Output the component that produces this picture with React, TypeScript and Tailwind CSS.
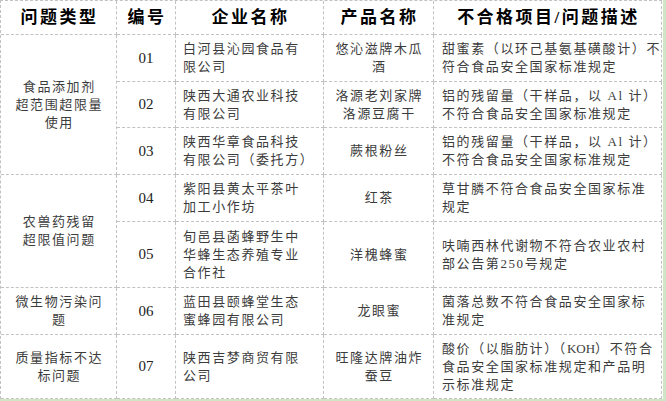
import React from "react";

type Row = {
  no: string;
  company: React.ReactNode[];
  product: React.ReactNode[];
  desc: React.ReactNode[];
};

const rows: Row[] = [
  { no: "01", company: ["白河县沁园食品有", "限公司"], product: ["悠沁滋牌木瓜", "酒"], desc: ["甜蜜素（以环己基氨基磺酸计）不", "符合食品安全国家标准规定"] },
  { no: "02", company: ["陕西大通农业科技", "有限公司"], product: ["洛源老刘家牌", "洛源豆腐干"], desc: ["铝的残留量（干样品，以 Al 计）", "不符合食品安全国家标准规定"] },
  { no: "03", company: ["陕西华章食品科技", "有限公司（委托方）"], product: ["蕨根粉丝"], desc: ["铝的残留量（干样品，以 Al 计）", "不符合食品安全国家标准规定"] },
  { no: "04", company: ["紫阳县黄太平茶叶", "加工小作坊"], product: ["红茶"], desc: ["草甘膦不符合食品安全国家标准", "规定"] },
  { no: "05", company: ["旬邑县菡蜂野生中", "华蜂生态养殖专业", "合作社"], product: ["洋槐蜂蜜"], desc: ["呋喃西林代谢物不符合农业农村", "部公告第250号规定"] },
  { no: "06", company: ["蓝田县颐蜂堂生态", "蜜蜂园有限公司"], product: ["龙眼蜜"], desc: ["菌落总数不符合食品安全国家标", "准规定"] },
  {
    no: "07",
    company: ["陕西吉梦商贸有限", "公司"],
    product: ["旺隆达牌油炸", "蚕豆"],
    desc: [
      <>
        酸价（以脂肪计）（<span className="tracking-[0px]">KOH</span>）不符合
      </>,
      "食品安全国家标准规定和产品明",
      "示标准规定",
    ],
  },
];

const cell = "border-r border-b border-dashed border-[#c2c2c2] flex flex-col justify-center";
const body = "text-[13px] leading-[18px] tracking-[1.6px] text-[#3c3c3c] whitespace-nowrap";
const head = "text-[17px] leading-[20px] tracking-[2.5px] font-bold text-black whitespace-nowrap items-center pl-[2px]";

function Lines({ lines }: { lines: React.ReactNode[] }) {
  return (
    <>
      {lines.map((l, i) => (
        <span key={i} className="block">
          {l}
        </span>
      ))}
    </>
  );
}

export default function App() {
  const cats: { span: string; lines: string[] }[] = [
    { span: "row-span-3", lines: ["食品添加剂", "超范围超限量", "使用"] },
    { span: "row-span-2", lines: ["农兽药残留", "超限值问题"] },
    { span: "row-span-1", lines: ["微生物污染问", "题"] },
    { span: "row-span-1", lines: ["质量指标不达", "标问题"] },
  ];
  const catStart = [0, 3, 5, 6];

  return (
    <div className="relative w-[666px] h-[401px] bg-white overflow-hidden font-[family-name:'Liberation_Serif','Noto_Sans_CJK_SC',serif]">
      <div className="grid grid-cols-[116px_59px_148px_110px_228px] grid-rows-[34px_47px_46px_47px_47px_66px_47px_64px] w-max border-l border-t border-dashed border-[#c2c2c2]">
        <div className={`${cell} ${head}`}>问题类型</div>
        <div className={`${cell} ${head}`}>编号</div>
        <div className={`${cell} ${head}`}>企业名称</div>
        <div className={`${cell} ${head}`}>产品名称</div>
        <div className={`${cell} ${head}`}>不合格项目/问题描述</div>

        {rows.map((r, i) => {
          const ci = catStart.indexOf(i);
          return (
            <React.Fragment key={r.no}>
              {ci >= 0 && (
                <div className={`${cell} ${body} ${cats[ci].span} items-center text-center pl-[1.6px]`}>
                  <Lines lines={cats[ci].lines} />
                </div>
              )}
              <div className={`${cell} items-center text-[15px] text-[#222] col-start-2`}>{r.no}</div>
              <div className={`${cell} ${body} pl-[7px]`}>
                <Lines lines={r.company} />
              </div>
              <div className={`${cell} ${body} items-center text-center pl-[1.6px]`}>
                <Lines lines={r.product} />
              </div>
              <div className={`${cell} ${body} pl-[8px]`}>
                <Lines lines={r.desc} />
              </div>
            </React.Fragment>
          );
        })}
      </div>
      <div className="absolute right-0 top-0 w-[3px] h-full bg-[#cfe5c5]" />
      <div className="absolute left-0 bottom-0 w-full h-[2px] bg-[#cfe5c5]" />
    </div>
  );
}
